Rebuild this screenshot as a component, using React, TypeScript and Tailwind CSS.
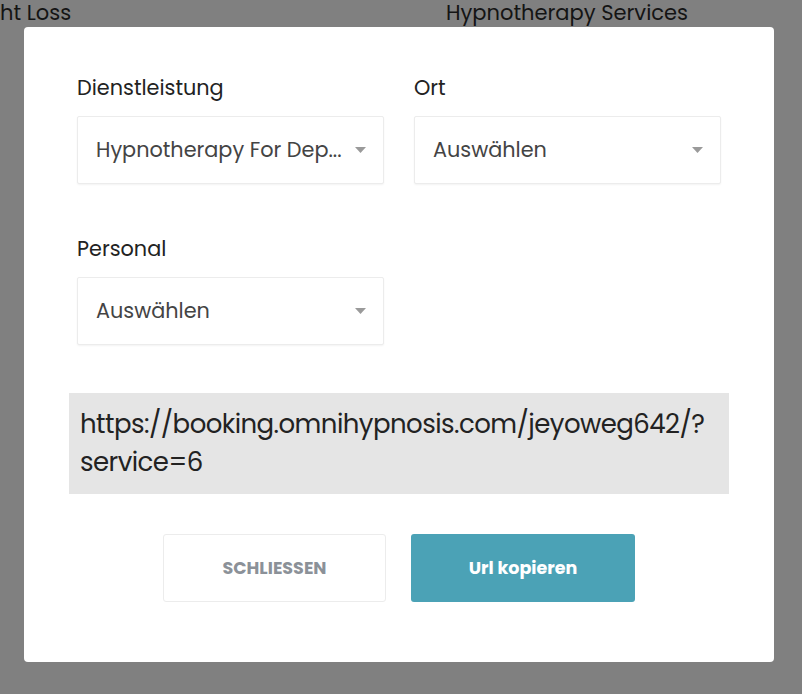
import { useState } from 'react'

const FONT = "font-['Poppins','Open_Sans','Noto_Sans',sans-serif]"

function Caret() {
  return (
    <svg width="11" height="6" viewBox="0 0 11 6" className="shrink-0">
      <path d="M0 0 L11 0 L5.5 6 Z" fill="#9a9a9a" />
    </svg>
  )
}

function SelectField({ label, value }: { label: string; value: string }) {
  return (
    <div className="flex flex-col">
      <label className="h-[22px] text-[20.8px] leading-[22px] text-[#222]">{label}</label>
      <div className="mt-[17px] flex h-[68px] w-[307px] items-center justify-between rounded-[2px] border border-[#ececec] bg-white pl-[18px] pr-[17px] shadow-[0_1px_2px_rgba(0,0,0,0.05)]">
        <span className="whitespace-nowrap text-[20.8px] text-[#444]">{value}</span>
        <Caret />
      </div>
    </div>
  )
}

export default function App() {
  const [copied, setCopied] = useState(false)
  const url = 'https://booking.omnihypnosis.com/jeyoweg642/?service=6'

  return (
    <div className={`h-[694px] w-[802px] overflow-hidden bg-[#808080] ${FONT}`}>
      {/* page behind the overlay */}
      <div className="flex h-[27px] text-[21px] leading-[26px] text-[#141414]">
        <span className="w-[446px] whitespace-nowrap">ht Loss</span>
        <span className="whitespace-nowrap">Hypnotherapy Services</span>
      </div>

      {/* Modal */}
      <div className="ml-[24px] flex h-[635px] w-[750px] flex-col rounded-[4px] bg-white pt-[50px]">
        <div className="grid grid-cols-[307px_307px] gap-x-[30px] gap-y-[54px] px-[53px]">
          <SelectField label="Dienstleistung" value="Hypnotherapy For Dep..." />
          <SelectField label="Ort" value="Auswählen" />
          <SelectField label="Personal" value="Auswählen" />
        </div>

        <div className="mx-[45px] mt-[48px] h-[101px] bg-[#e5e5e5] px-[11px] pt-[12px] text-[26px] leading-[38px] tracking-[-0.55px] text-[#222]">
          https://booking.omnihypnosis.com/jeyoweg642/?
          <br />
          service=6
        </div>

        <div className="mt-[40px] flex justify-center gap-[25px]">
          <button className="h-[68px] w-[223px] rounded-[3px] border border-[#ececec] bg-white text-[17.5px] font-bold text-[#8b9198]">
            SCHLIESSEN
          </button>
          <button
            onClick={() => {
              navigator.clipboard?.writeText(url).catch(() => {})
              setCopied(true)
            }}
            className="h-[68px] w-[224px] rounded-[3px] bg-[#4ba2b6] text-[17.5px] font-bold text-white"
          >
            {copied ? 'Url kopieren' : 'Url kopieren'}
          </button>
        </div>
      </div>
    </div>
  )
}
